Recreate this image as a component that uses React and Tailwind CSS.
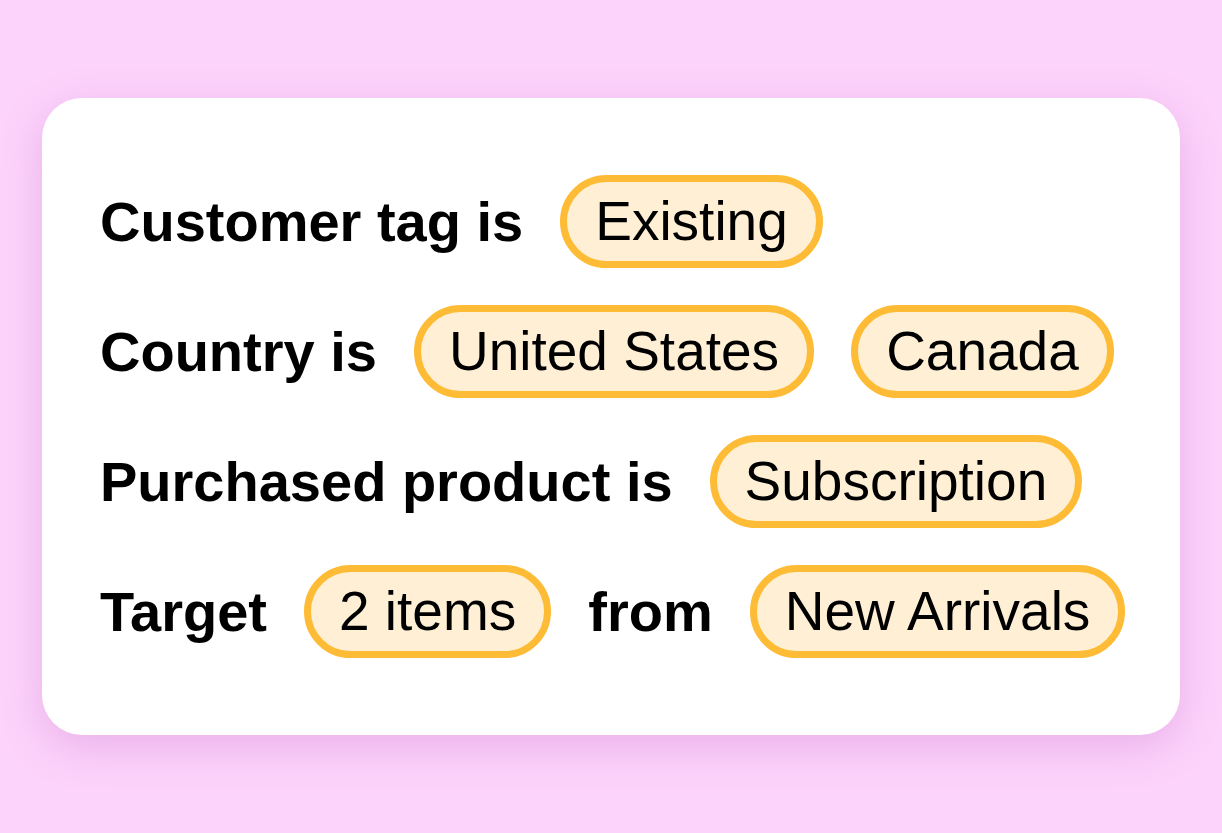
import React from "react";

const rows = [
  [{ label: "Customer tag is" }, { pill: "Existing" }],
  [{ label: "Country is" }, { pill: "United States" }, { pill: "Canada" }],
  [{ label: "Purchased product is" }, { pill: "Subscription" }],
  [{ label: "Target" }, { pill: "2 items" }, { label: "from" }, { pill: "New Arrivals" }],
];

const Pill = ({ children }) => (
  <span className="flex h-[93px] shrink-0 items-center whitespace-nowrap rounded-full border-[7px] border-[#febc36] bg-[#fff0d5] px-[28px] text-[55px] font-normal text-black">
    {children}
  </span>
);

const App = () => {
  return (
    <div
      className="flex min-h-screen w-full items-center justify-center bg-[#fcd3fb]"
      style={{ fontFamily: '"Liberation Sans", Arial, Helvetica, sans-serif' }}
    >
      <div className="flex w-[1138px] flex-col gap-[37px] rounded-[40px] bg-white px-[58px] py-[77px] shadow-[0_12px_40px_rgba(190,90,190,0.28)]">
        {rows.map((row, i) => (
          <div key={i} className="flex items-center gap-[37px] whitespace-nowrap leading-none">
            {row.map((item, j) =>
              item.pill ? (
                <Pill key={j}>{item.pill}</Pill>
              ) : (
                <span key={j} className="shrink-0 text-[56px] font-bold text-black">
                  {item.label}
                </span>
              )
            )}
          </div>
        ))}
      </div>
    </div>
  );
};

export default App;
